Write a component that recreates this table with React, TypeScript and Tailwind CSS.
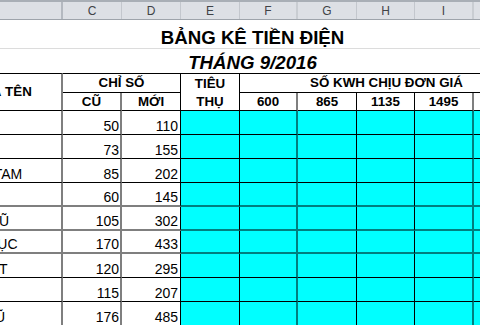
import React from "react";

const letters = ["B", "C", "D", "E", "F", "G", "H", "I", "J", "K"];
const colW = ["w-[133px]", "w-[59px]", "w-[59px]", "w-[59px]", "w-[58px]", "w-[59px]", "w-[58px]", "w-[59px]", "w-[59px]", "w-[42px]"];
const hdrSep = [
  "border-r-2 border-r-[#b4b9c0]",
  "border-r border-r-[#c3c7cd]",
  "border-r border-r-[#c3c7cd]",
  "border-r border-r-[#c3c7cd]",
  "border-r-2 border-r-[#c9cdd2]",
  "border-r border-r-[#c3c7cd]",
  "border-r border-r-[#c3c7cd]",
  "border-r-2 border-r-[#c9cdd2]",
  "border-r border-r-[#c3c7cd]",
  "",
];
const vLine = [
  "border-r-2 border-r-black/50",
  "border-r-2 border-r-black/50",
  "border-r border-r-black",
  "border-r border-r-black",
  "border-r-2 border-r-black/50",
  "border-r border-r-black",
  "border-r border-r-black",
  "border-r-2 border-r-black/50",
  "border-r border-r-black",
  "",
];

const data: [string, number, number][] = [
  ["TRẦN AN", 50, 110],
  ["LÊ BÌNH", 73, 155],
  ["NGÔ THỊ TAM", 85, 202],
  ["ĐỖ MINH", 60, 145],
  ["HỒ VĂN VŨ", 105, 302],
  ["HỒ VĂN LỤC", 170, 433],
  ["PHẠM VIỆT", 120, 295],
  ["TRẦN HÀ", 115, 207],
  ["LÊ ANH VŨ", 176, 485],
];

const rowH = ["h-[24px]", "h-[24px]", "h-[24px]", "h-[24px]", "h-[24px]", "h-[23px]", "h-[24px]", "h-[24px]", "h-[24px]"];
const hLine = [
  "border-b border-b-black",
  "border-b border-b-black",
  "border-b border-b-black",
  "border-b-2 border-b-black/50",
  "border-b-2 border-b-black/50",
  "border-b-2 border-b-black/50",
  "border-b border-b-black",
  "border-b border-b-black",
  "border-b border-b-black",
];

const gridCols = "grid grid-cols-[133px_59px_59px_59px_58px_59px_58px_59px_59px_42px]";

export default function App() {
  return (
    <div className="w-[480px] h-[325px] overflow-hidden bg-white font-['Liberation_Sans',Arial,sans-serif] text-black">
      <div className="ml-[-70px] w-[645px]">
        {/* column letters */}
        <div className="flex h-[20px] bg-[#dde0e5] border-t-2 border-t-[#a9afb6] border-b border-b-[#9ea4ab]">
          {letters.map((l, i) => (
            <div
              key={l}
              className={`${colW[i]} ${hdrSep[i]} flex items-center justify-center text-[12px] text-[#3f4346] leading-none`}
            >
              {l}
            </div>
          ))}
        </div>
        {/* title */}
        <div className="h-[29px] border-b border-b-[#dcdcdc] flex items-end justify-center">
          <span className="text-[18.67px] font-bold leading-[21px]">BẢNG KÊ TIỀN ĐIỆN</span>
        </div>
        <div className="h-[24px] flex items-end justify-center">
          <span className="text-[18.67px] font-bold italic leading-[21px]">THÁNG 9/2016</span>
        </div>
        {/* header */}
        <div className={`${gridCols} grid-rows-[20px_18px] text-[13.33px] font-bold leading-none`}>
          <div className="row-span-2 border-t border-t-black border-b border-b-black border-r-2 border-r-black/50 flex items-center justify-center">
            HỌ VÀ TÊN
          </div>
          <div className="col-span-2 border-t border-t-black border-b border-b-black border-r border-r-black flex items-center justify-center">
            CHỈ SỐ
          </div>
          <div className="row-span-2 border-t border-t-black border-b border-b-black border-r border-r-black flex flex-col items-center justify-center leading-[18px] pt-[1px]">
            <span>TIÊU</span>
            <span>THỤ</span>
          </div>
          <div className="col-span-5 border-t border-t-black border-b border-b-black flex items-center justify-center">
            SỐ KWH CHỊU ĐƠN GIÁ
          </div>
          <div className="border-t border-t-black" />
          <div className="border-b border-b-black border-r-2 border-r-black/50 flex items-center justify-center">CŨ</div>
          <div className="border-b border-b-black border-r border-r-black flex items-center justify-center">MỚI</div>
          <div className="border-b border-b-black border-r-2 border-r-black/50 flex items-center justify-center">600</div>
          <div className="border-b border-b-black border-r border-r-black flex items-center justify-center">865</div>
          <div className="border-b border-b-black border-r border-r-black flex items-center justify-center">1135</div>
          <div className="border-b border-b-black border-r-2 border-r-black/50 flex items-center justify-center">1495</div>
          <div className="border-b border-b-black border-r border-r-black flex items-center justify-center">1765</div>
          <div className="border-b border-b-black" />
        </div>
        {/* data */}
        {data.map(([name, a, b], r) => (
          <div key={r} className={`${gridCols} text-[14px] leading-[16px]`}>
            <div className={`${rowH[r]} ${hLine[r]} ${vLine[0]} flex items-end pl-[2px] whitespace-nowrap`}>{name}</div>
            <div className={`${rowH[r]} ${hLine[r]} ${vLine[1]} flex items-end justify-end pr-[1px]`}>{a}</div>
            <div className={`${rowH[r]} ${hLine[r]} ${vLine[2]} flex items-end justify-end pr-[2px]`}>{b}</div>
            {[3, 4, 5, 6, 7, 8, 9].map((c) => (
              <div key={c} className={`${rowH[r]} ${hLine[r]} ${vLine[c]} bg-[#00ffff]`} />
            ))}
          </div>
        ))}
      </div>
    </div>
  );
}
